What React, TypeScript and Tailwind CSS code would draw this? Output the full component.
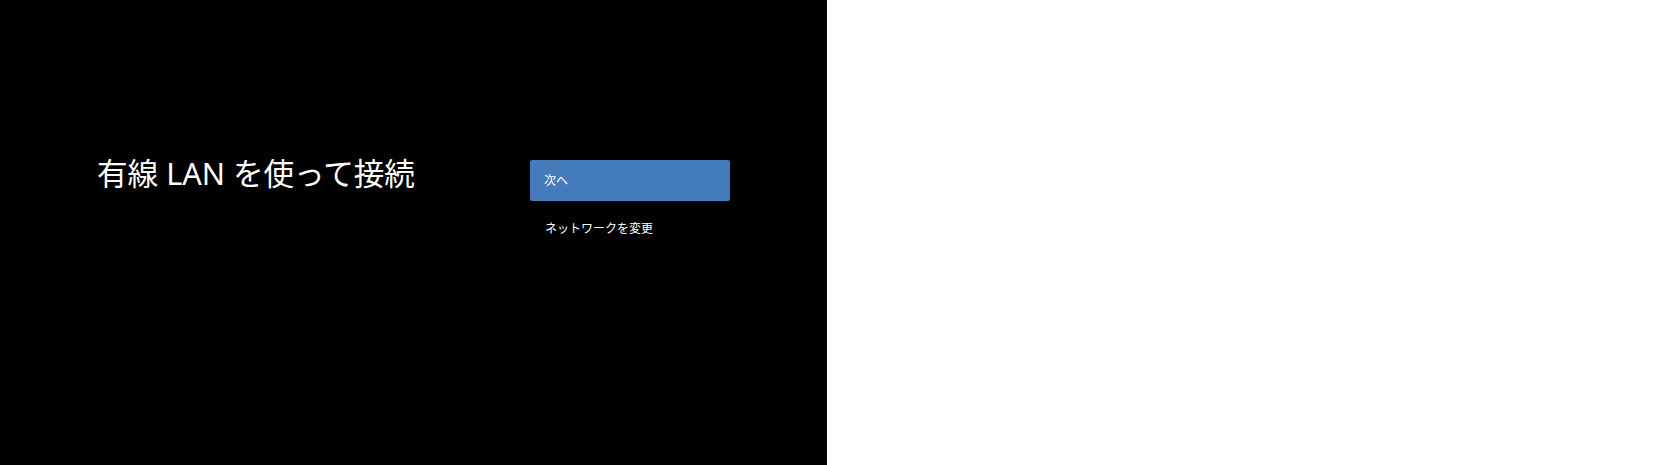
const font = {
  fontFamily: '"Noto Sans", "Noto Sans CJK JP", sans-serif',
}

export default function App() {
  return (
    <div className="flex h-[465px] w-[1660px] bg-white" style={font}>
      {/* Setup panel */}
      <div className="flex h-full w-[827px] bg-black pt-[155px] pl-[97px]">
        <div className="w-[433px]">
          <h1 className="text-[30.6px] font-normal leading-[36px] text-white">
            有線 LAN を使って接続
          </h1>
        </div>
        <div className="flex w-[200px] flex-col gap-[7px] pt-[5px]">
          <button className="flex h-[41px] items-center rounded-[2px] bg-[#437bbb] px-[14px] text-left text-[12px] text-white">
            次へ
          </button>
          <button className="flex h-[41px] items-center px-[15px] text-left text-[12px] text-white">
            ネットワークを変更
          </button>
        </div>
      </div>
      <div className="flex-1 bg-white" />
    </div>
  )
}
